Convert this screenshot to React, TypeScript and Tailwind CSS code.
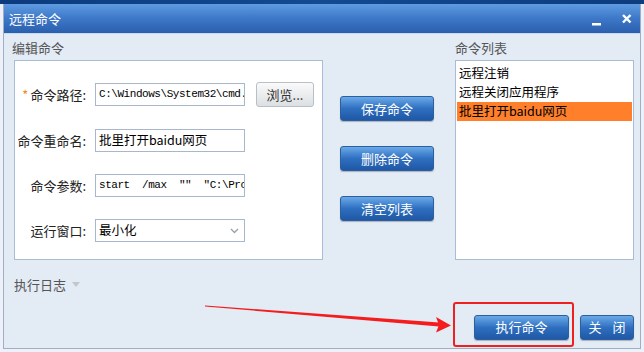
import React from "react";

const cjk = { fontFamily: '"Noto Sans CJK SC", "Noto Sans", sans-serif' };
const mono = { fontFamily: '"Liberation Mono", "Noto Sans CJK SC", monospace' };

function BlueButton({ children, className = "" }: { children: React.ReactNode; className?: string }) {
  return (
    <div
      className={`flex items-center justify-center rounded-[3px] border border-[#2d5f9e] bg-gradient-to-b from-[#6aaae8] via-[#2f6fc0] to-[#1f58a6] text-[13px] text-white shadow-[0_1px_1px_rgba(0,0,0,0.25)] ${className}`}
      style={cjk}
    >
      {children}
    </div>
  );
}

function Row({ label, star, children }: { label: string; star?: boolean; children: React.ReactNode }) {
  return (
    <div className="flex h-[23px] items-center">
      <div className="flex w-[72px] justify-end pr-[1px] text-[13px] text-[#222]" style={cjk}>
        {star && <span className="mr-[2px] text-[#f08a24]">*</span>}
        <span>{label}</span>
      </div>
      <div className="ml-[8px]">{children}</div>
    </div>
  );
}

function Input({ children }: { children: React.ReactNode }) {
  return (
    <div className="flex h-[23px] w-[150px] items-center overflow-hidden whitespace-nowrap border border-[#a7b8cc] bg-white pl-[3px] text-[12px] text-black">
      {children}
    </div>
  );
}

export default function App() {
  return (
    <div className="relative h-[352px] w-[644px] overflow-hidden bg-[#eef2f8]">
      <div className="h-[4px] bg-gradient-to-r from-[#0c3b7e] via-[#134a92] to-[#0d3c7f]" />
      <div className="mx-[3px] flex h-[345px] w-[638px] flex-col border-x border-b border-[#9eb0c7]">
        {/* Title bar */}
        <div className="flex h-[29px] items-center bg-gradient-to-b from-[#5e9be0] via-[#3d78c8] to-[#2a5fad] pl-[5px] pr-[8px]">
          <span className="text-[13px] text-white" style={cjk}>远程命令</span>
          <div className="ml-auto flex items-center gap-[20px]">
            <svg width="10" height="10" viewBox="0 0 10 10" className="mt-[6px]">
              <rect x="0" y="6" width="9" height="2.5" fill="white" />
            </svg>
            <svg width="10" height="10" viewBox="0 0 10 10">
              <path d="M1 1 L8.5 8.5 M8.5 1 L1 8.5" stroke="white" strokeWidth="2.4" />
            </svg>
          </div>
        </div>
        {/* Body */}
        <div className="relative flex flex-1 flex-col border-t border-[#c9daf0] bg-[#e3ebf5] pl-[8px] pt-[6px]">
          <div className="flex">
            {/* Left column */}
            <div className="flex flex-col">
              <div className="h-[16px] text-[13px] leading-[16px] text-[#555]" style={cjk}>编辑命令</div>
              <div className="ml-[2px] mt-[4px] flex h-[200px] w-[309px] flex-col gap-[22px] border border-[#a9bcd5] bg-white pt-[21px]">
                <div className="flex items-center">
                  <Row label="命令路径:" star>
                    <Input>
                      <span className="text-[11px] tracking-[-0.45px]" style={mono}>C:\Windows\System32\cmd.</span>
                    </Input>
                  </Row>
                  <div
                    className="ml-[11px] flex h-[25px] w-[58px] items-center justify-center rounded-[3px] border border-[#b9bfc7] bg-gradient-to-b from-[#fafafa] to-[#dcdfe3] text-[13px] text-[#333]"
                    style={cjk}
                  >
                    浏览...
                  </div>
                </div>
                <Row label="命令重命名:">
                  <Input>
                    <span className="text-[12.5px]" style={cjk}>批里打开baidu网页</span>
                  </Input>
                </Row>
                <Row label="命令参数:">
                  <Input>
                    <span className="text-[11px] tracking-[-0.45px]" style={mono}>
                      start&nbsp;&nbsp;/max&nbsp;&nbsp;""&nbsp;&nbsp;"C:\Prc
                    </span>
                  </Input>
                </Row>
                <Row label="运行窗口:">
                  <Input>
                    <span className="text-[12.5px]" style={cjk}>最小化</span>
                    <svg width="9" height="6" viewBox="0 0 9 6" className="ml-auto mr-[5px]">
                      <path d="M1 1 L4.5 4.5 L8 1" stroke="#9aa3ad" strokeWidth="1.4" fill="none" />
                    </svg>
                  </Input>
                </Row>
              </div>
            </div>
            {/* Middle buttons */}
            <div className="ml-[17px] flex flex-col gap-[25px] pt-[56px]">
              <BlueButton className="h-[25px] w-[94px]">保存命令</BlueButton>
              <BlueButton className="h-[25px] w-[94px]">删除命令</BlueButton>
              <BlueButton className="h-[25px] w-[94px]">清空列表</BlueButton>
            </div>
            {/* Right list */}
            <div className="ml-[21px] flex flex-col">
              <div className="h-[16px] text-[13px] leading-[16px] text-[#555]" style={cjk}>命令列表</div>
              <div className="mt-[4px] flex h-[200px] w-[179px] flex-col border border-[#a9bcd5] bg-white px-[1px] pt-[2px] text-[12.5px] text-black" style={cjk}>
                <div className="flex h-[20px] items-center pl-[2px]">远程注销</div>
                <div className="flex h-[19px] items-center pl-[2px]">远程关闭应用程序</div>
                <div className="flex h-[19px] items-center bg-[#ff7f2a] pl-[2px]">批里打开baidu网页</div>
              </div>
            </div>
          </div>
          {/* Log */}
          <div className="mt-[15px] flex items-center text-[13px] text-[#555]" style={cjk}>
            <span className="ml-[2px]">执行日志</span>
            <svg width="8" height="5" viewBox="0 0 8 5" className="ml-[6px]">
              <path d="M0 0 L8 0 L4 5 Z" fill="#c2c7cd" />
            </svg>
          </div>
          {/* Bottom buttons */}
          <div className="mt-[20px] flex justify-end gap-[11px] pr-[6px]">
            <BlueButton className="h-[25px] w-[95px]">执行命令</BlueButton>
            <BlueButton className="h-[25px] w-[54px] gap-[11px]">
              <span>关</span>
              <span>闭</span>
            </BlueButton>
          </div>
        </div>
      </div>
      {/* Annotation: red box */}
      <div className="absolute left-[453px] top-[302px] h-[45px] w-[121px] rounded-[3px] border-2 border-[#f02020]" />
      {/* Annotation: arrow */}
      <svg className="absolute left-0 top-0" width="644" height="352" viewBox="0 0 644 352">
        <polygon points="205,305.6 439,322.4 439,326.6 205,306.4" fill="#f41c1c" />
        <polygon points="436,317 451,325.5 436,332.5 439,325" fill="#f41c1c" />
      </svg>
    </div>
  );
}
